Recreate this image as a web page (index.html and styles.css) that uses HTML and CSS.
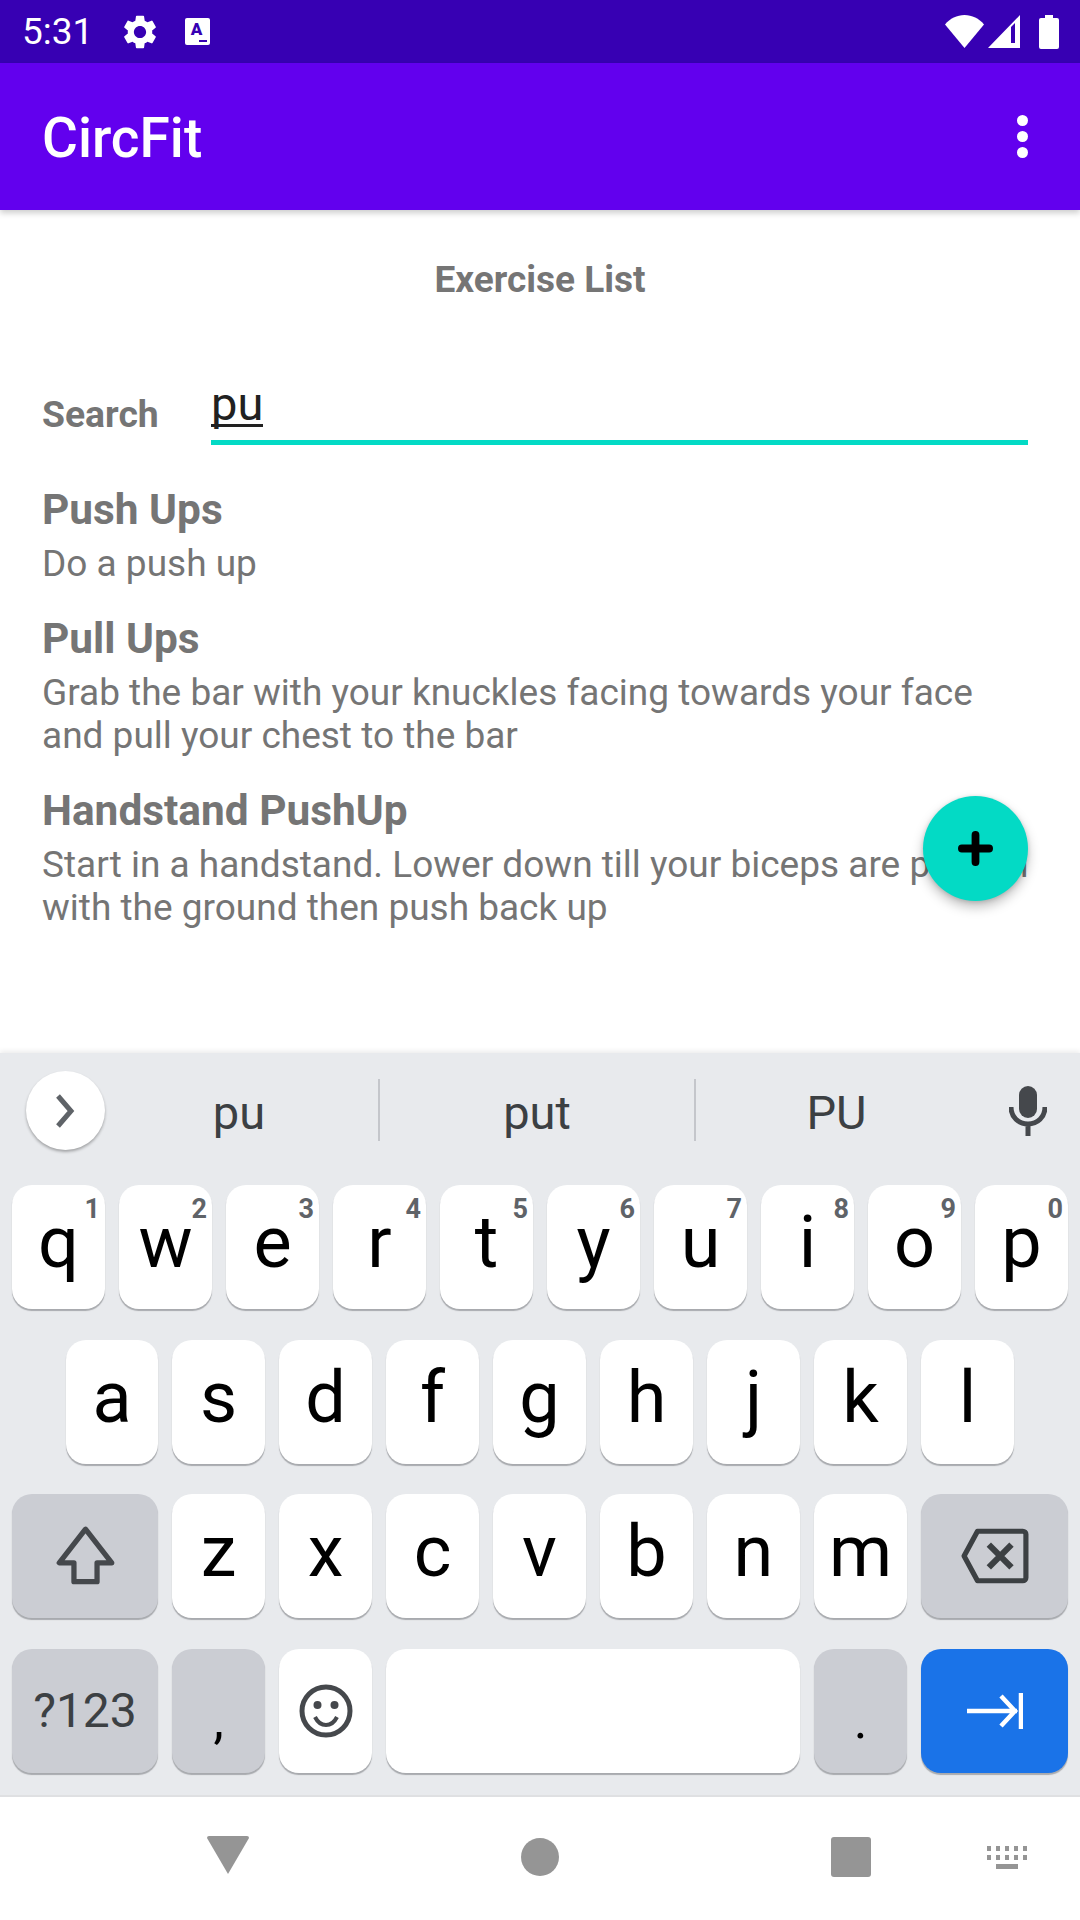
FILE: index.html
```html
<!DOCTYPE html>
<html lang="en">
<head>
<meta charset="utf-8">
<title>CircFit</title>
<link rel="stylesheet" href="styles.css">
</head>
<body>
<div class="screen">
  <header class="status">
    <span class="time">5:31</span>
    <svg class="gear" viewBox="2 2 20 20"><path d="M19.14 12.94c.04-.3.06-.61.06-.94 0-.32-.02-.64-.07-.94l2.03-1.58a.49.49 0 0 0 .12-.61l-1.92-3.32a.488.488 0 0 0-.59-.22l-2.39.96c-.5-.38-1.03-.7-1.62-.94l-.36-2.54a.484.484 0 0 0-.48-.41h-3.84c-.24 0-.43.17-.47.41l-.36 2.54c-.59.24-1.13.57-1.62.94l-2.39-.96c-.22-.08-.47 0-.59.22L2.74 8.87c-.12.21-.08.47.12.61l2.03 1.58c-.05.3-.09.63-.09.94s.02.64.07.94l-2.03 1.58a.49.49 0 0 0-.12.61l1.92 3.32c.12.22.37.29.59.22l2.39-.96c.5.38 1.03.7 1.62.94l.36 2.54c.05.24.24.41.48.41h3.84c.24 0 .44-.17.47-.41l.36-2.54c.59-.24 1.13-.56 1.62-.94l2.39.96c.22.08.47 0 .59-.22l1.92-3.32c.12-.22.07-.47-.12-.61l-2.01-1.58zM12 15.6c-1.98 0-3.6-1.62-3.6-3.6s1.62-3.6 3.6-3.6 3.6 1.62 3.6 3.6-1.62 3.6-3.6 3.6z"/></svg>
    <span class="abox">A<i class="adots"></i></span>
    <span class="status-right">
      <svg class="wifi" viewBox="0 0 39 33"><path d="M0 9.5C5 3.5 12 0 19.5 0S34 3.500 39 9.500L19.500 33z"/></svg>
      <svg class="signal" viewBox="0 0 32 33"><path fill-rule="evenodd" d="M0 33L32 0v33zM23 28h4V8l-4 4z"/></svg>
      <svg class="battery" viewBox="0 0 20 34"><path d="M6 0h8v3h4q2 0 2 2v27q0 2-2 2H2q-2 0-2-2V5q0-2 2-2h4z"/></svg>
    </span>
  </header>
  <div class="appbar">
    <span class="app-title">CircFit</span>
    <span class="overflow"><i></i><i></i><i></i></span>
  </div>
  <main class="content">
    <h1 class="page-title">Exercise List</h1>
    <div class="search">
      <span class="search-label">Search</span>
      <div class="search-field"><span class="search-value">pu</span></div>
    </div>
    <section class="item">
      <h2>Push Ups</h2>
      <p>Do a push up</p>
    </section>
    <section class="item">
      <h2>Pull Ups</h2>
      <p>Grab the bar with your knuckles facing towards your face and pull your chest to the bar</p>
    </section>
    <section class="item">
      <h2>Handstand PushUp</h2>
      <p>Start in a handstand. Lower down till your biceps are parallel with the ground then push back up</p>
    </section>
    <button class="fab" type="button" aria-label="Add">
      <svg viewBox="0 0 36 36"><path d="M18 4v28M4 18h28"/></svg>
    </button>
  </main>
  <section class="keyboard">
    <div class="suggest">
      <span class="chev"><svg viewBox="0 0 24 40"><path d="M5 5l13 15L5 35"/></svg></span>
      <span class="word w1">pu</span>
      <span class="word w2">put</span>
      <span class="word w3">PU</span>
      <svg class="mic" viewBox="0 0 38 50"><path class="mic-body" d="M19 0a9 9 0 0 1 9 9v14a9 9 0 0 1-18 0V9a9 9 0 0 1 9-9z"/><path class="mic-line" d="M2 21c0 10 7.500 17 17 17s17-7 17-17M19 38v12"/></svg>
    </div>
    <div class="row">
      <span class="key">q<sup>1</sup></span><span class="key">w<sup>2</sup></span><span class="key">e<sup>3</sup></span><span class="key">r<sup>4</sup></span><span class="key">t<sup>5</sup></span><span class="key">y<sup>6</sup></span><span class="key">u<sup>7</sup></span><span class="key">i<sup>8</sup></span><span class="key">o<sup>9</sup></span><span class="key">p<sup>0</sup></span>
    </div>
    <div class="row row-home">
      <span class="key">a</span><span class="key">s</span><span class="key">d</span><span class="key">f</span><span class="key">g</span><span class="key">h</span><span class="key">j</span><span class="key">k</span><span class="key">l</span>
    </div>
    <div class="row">
      <span class="key wide mod"><svg class="shift" viewBox="0 0 60 60"><path d="M30 4L5 36h14v18h22V36h14z"/></svg></span>
      <span class="key">z</span><span class="key">x</span><span class="key">c</span><span class="key">v</span><span class="key">b</span><span class="key">n</span><span class="key">m</span>
      <span class="key wide-end mod"><svg class="del" viewBox="0 0 66 54"><path class="del-box" d="M16 3h44a3 3 0 0 1 3 3v42a3 3 0 0 1-3 3H16L3 27z"/><path class="del-x" d="M27 16l22 22M49 16L27 38"/></svg></span>
    </div>
    <div class="row">
      <span class="key wide mod sym">?123</span>
      <span class="key mod punct">,</span>
      <span class="key icon"><svg class="emoji" viewBox="0 0 54 54"><circle class="face" cx="27" cy="27" r="24"/><circle cx="18.500" cy="21" r="4"/><circle cx="35.500" cy="21" r="4"/><path class="smile" d="M16 33c3 6 7 8 11 8s8-2 11-8"/></svg></span>
      <span class="key space"></span>
      <span class="key mod punct">.</span>
      <span class="key wide-end enter"><svg class="next" viewBox="0 0 56 36"><path d="M0 18h50M34 3l14 15-14 15M54 0v36"/></svg></span>
    </div>
  </section>
  <nav class="navbar">
    <svg class="nav-back" viewBox="0 0 42 38"><path d="M0 2q0-2 2-2h38q2 0 2 2L21 38z"/></svg>
    <span class="nav-home"></span>
    <span class="nav-recent"></span>
    <svg class="nav-kbd" viewBox="0 0 41 23"><path d="M0 0h4v5H0zM9 0h4v5H9zM18 0h4v5h-4zM27 0h4v5h-4zM36 0h4v5h-4zM0 9h4v5H0zM9 9h4v5H9zM18 9h4v5h-4zM27 9h4v5h-4zM36 9h4v5h-4zM9 18h22v5H9z"/></svg>
  </nav>
</div>
</body>
</html>
```

FILE: styles.css
```css
* { box-sizing: border-box; }
html, body { margin: 0; padding: 0; }
body { width: 1080px; height: 1920px; overflow: hidden; background: #fff; font-family: Roboto, "Liberation Sans", sans-serif; }
.screen { width: 1080px; height: 1920px; display: flex; flex-direction: column; }

.status { height: 63px; flex: none; background: #3700b3; display: flex; align-items: center; padding-left: 22px; color: #fff; }
.status svg { fill: #fff; display: block; flex: none; }
.time { font-size: 37px; line-height: 63px; width: 101px; }
.gear { width: 34px; height: 34px; }
.abox { margin-left: 28px; width: 25px; height: 27px; background: #fff; border-radius: 2px; color: #3700b3; font-size: 17px; font-weight: 900; line-height: 23px; text-align: center; position: relative; padding-right: 2px; }
.adots { position: absolute; right: 3px; bottom: 3px; width: 8px; height: 2px; background: #3700b3; }
.status-right { margin-left: auto; display: flex; align-items: center; padding-right: 21px; }
.wifi { width: 39px; height: 33px; margin-right: 4px; }
.signal { width: 32px; height: 33px; margin-right: 19px; }
.battery { width: 20px; height: 34px; }

.appbar { height: 147px; flex: none; background: #6200ee; display: flex; align-items: center; justify-content: space-between; padding: 0 52px 0 42px; box-shadow: 0 3px 6px rgba(0,0,0,.2); position: relative; z-index: 1; }
.app-title { color: #fff; font-size: 55px; font-weight: 500; padding-top: 2px; }
.overflow { display: flex; flex-direction: column; gap: 5px; }
.overflow i { width: 11px; height: 11px; border-radius: 50%; background: #fff; display: block; }

.content { flex: 1; min-height: 0; position: relative; padding: 0 46px 0 42px; color: #757575; }
.page-title { margin: 49px 0 0 4px; font-size: 37px; line-height: 42px; font-weight: 700; text-align: center; }
.search { display: flex; align-items: flex-end; margin: 51px 6px 0 0; height: 93px; }
.search-label { width: 169px; font-size: 37.300px; font-weight: 700; line-height: 42px; margin-bottom: 10px; }
.search-field { flex: 1; height: 93px; border-bottom: 5px solid #03dac5; }
.search-value { display: inline-block; color: #212121; font-size: 47px; line-height: 55px; margin-top: 24px; border-bottom: 3px solid #212121; height: 51px; }

.item h2 { margin: 0; font-size: 42.400px; line-height: 45px; font-weight: 700; }
.item p { margin: 10px 0 0; font-size: 37px; line-height: 43px; }
.search + .item { margin-top: 42px; }
.item + .item { margin-top: 31px; }

.fab { position: absolute; left: 923px; top: 586px; width: 105px; height: 105px; border: 0; border-radius: 50%; background: #03dac5; padding: 35px; box-shadow: 0 6px 12px rgba(0,0,0,.25), 0 1px 4px rgba(0,0,0,.15); }
.fab svg { display: block; width: 35px; height: 35px; fill: none; stroke: #000; stroke-width: 8; stroke-linecap: round; }

.keyboard { height: 744px; flex: none; background: #e8eaed; border-bottom: 2px solid #dfe0e2; box-shadow: 0 -2px 5px rgba(0,0,0,.08); position: relative; }
.suggest { height: 132px; position: relative; display: flex; align-items: center; color: #3c4043; }
.chev { position: absolute; left: 26px; top: 18px; width: 79px; height: 79px; border-radius: 50%; background: #fff; box-shadow: 0 2px 3px rgba(0,0,0,.3); display: flex; align-items: center; justify-content: center; padding-right: 2px; }
.chev svg { width: 24px; height: 40px; fill: none; stroke: #5f6368; stroke-width: 5; }
.word { font-size: 47px; line-height: 56px; text-align: center; height: 62px; width: 316px; margin-top: -18px; padding-top: 6px; }
.w1 { margin-left: 64px; border-right: 2px solid #c4c6cb; padding-left: 36px; }
.w2 { border-right: 2px solid #c4c6cb; }
.w3 { width: 281px; }
.mic { width: 38px; height: 50px; position: absolute; left: 1009px; top: 33px; }
.mic-body { fill: #45484c; }
.mic-line { fill: none; stroke: #45484c; stroke-width: 5; }

.row { display: flex; gap: 14px; padding: 0 12px; height: 124px; }
.row + .row { margin-top: 30.670px; }
.row-home { padding-left: 66px; }
.row-home .key:first-child { width: 92px; }
.key { width: 93px; height: 124px; flex: none; background: #fff; border-radius: 20px; box-shadow: 0 2px 1px -0.500px #a8aaae; color: #000; font-size: 72px; line-height: 120px; text-align: center; position: relative; display: flex; justify-content: center; align-items: center; padding-bottom: 8px; }
.key sup { position: absolute; top: 8px; right: 5px; font-size: 27px; line-height: 32px; font-weight: 700; color: #5f6368; }
.wide { width: 146px; padding-bottom: 0; }
.wide-end { width: 147px; padding-bottom: 0; }
.icon { padding-bottom: 0; }
.mod { background: #cbcdd3; }
.space { width: 414px; }
.enter { background: #1a73e8; }
.sym { font-size: 48px; color: #3c4043; }
.punct { font-size: 52px; padding-top: 28px; }
.shift { width: 63px; height: 63px; fill: none; stroke: #45484c; stroke-width: 5; stroke-linejoin: round; }
.del { width: 68px; height: 56px; }
.del-box { fill: none; stroke: #3c4043; stroke-width: 5; stroke-linejoin: round; }
.del-x { fill: none; stroke: #3c4043; stroke-width: 6; }
.emoji { width: 54px; height: 54px; fill: #45484c; }
.emoji .face { fill: none; stroke: #45484c; stroke-width: 5; }
.emoji .smile { fill: none; stroke: #45484c; stroke-width: 4; }
.next { width: 56px; height: 36px; fill: none; stroke: #fff; stroke-width: 4.500; }

.navbar { height: 123px; flex: none; background: #fff; position: relative; }
.navbar > * { position: absolute; }
.nav-back { left: 207px; top: 39px; width: 42px; height: 38px; fill: #959595; }
.nav-home { left: 521px; top: 41px; width: 38px; height: 38px; border-radius: 50%; background: #959595; }
.nav-recent { left: 831px; top: 40px; width: 40px; height: 40px; border-radius: 3px; background: #959595; }
.nav-kbd { left: 987px; top: 49px; width: 41px; height: 23px; fill: #959595; }
```
